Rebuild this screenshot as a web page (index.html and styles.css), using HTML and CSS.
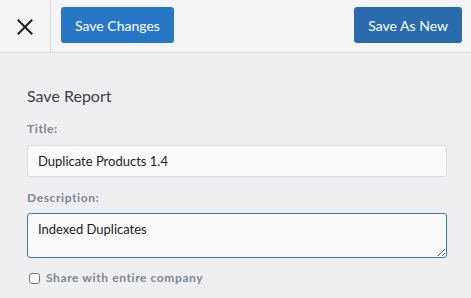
FILE: index.html
```html
<!DOCTYPE html>
<html lang="en">
<head>
    <meta charset="UTF-8">
    <meta name="viewport" content="width=device-width, initial-scale=1.0">
    <title>Save Report</title>
    <link rel="stylesheet" href="styles.css">
</head>
<body>
    <div class="toolbar">
        <button type="button" class="close-button" aria-label="Close">
            <svg xmlns="http://www.w3.org/2000/svg" width="16" height="16" viewBox="0 0 16 16" fill="none" stroke="currentColor" stroke-width="2" stroke-linecap="square">
                <line x1="1.5" y1="1.5" x2="14.5" y2="14.5"></line>
                <line x1="14.5" y1="1.5" x2="1.5" y2="14.5"></line>
            </svg>
        </button>
        <div class="toolbar-actions">
            <button type="button" class="primary-button">Save Changes</button>
            <button type="button" class="primary-button secondary">Save As New</button>
        </div>
    </div>

    <form class="report-form">
        <h2>Save Report</h2>

        <label class="field-label" for="title">Title:</label>
        <input type="text" id="title" class="text-input" value="Duplicate Products 1.4">

        <label class="field-label" for="description">Description:</label>
        <textarea id="description" class="text-input textarea">Indexed Duplicates</textarea>

        <label class="share-option">
            <input type="checkbox">
            <span>Share with entire company</span>
        </label>
    </form>
</body>
</html>
```

FILE: styles.css
```css
:root {
    --primary-color: #2877c6;
    --primary-dark: #2a6bae;
    --header-bg: #f4f4f6;
    --background: #efeff2;
    --label-color: #7a8599;
    --text-color: #3b3e45;
}

* {
    margin: 0;
    padding: 0;
    box-sizing: border-box;
    font-family: 'Lato', 'Open Sans', sans-serif;
}

body {
    background: var(--background);
    width: 471px;
    height: 298px;
    overflow: hidden;
}

.toolbar {
    display: flex;
    height: 53px;
    background: var(--header-bg);
    border-bottom: 1px solid #dcdce0;
}

.close-button {
    width: 51px;
    display: flex;
    align-items: center;
    justify-content: center;
    padding-top: 1px;
    background: none;
    border: none;
    border-right: 1px solid #d6d6da;
    color: #1f1f22;
}

.toolbar-actions {
    flex: 1;
    display: flex;
    justify-content: space-between;
    align-items: flex-start;
    padding: 7px 9px 0 10px;
}

.primary-button {
    height: 36px;
    padding: 0 14px;
    background: var(--primary-color);
    color: white;
    border: none;
    border-radius: 3px;
    font-size: 14px;
    cursor: pointer;
}

.primary-button.secondary {
    background: var(--primary-dark);
}

.report-form {
    display: flex;
    flex-direction: column;
    padding: 33px 24px 0 27px;
}

h2 {
    color: var(--text-color);
    font-size: 16px;
    font-weight: 400;
    line-height: 20px;
    margin-bottom: 15px;
}

.field-label {
    color: var(--label-color);
    font-size: 12px;
    font-weight: 700;
    letter-spacing: 0.6px;
    line-height: 16px;
    margin-bottom: 8px;
}

.text-input {
    width: 420px;
    height: 32px;
    padding: 0 10px;
    background: #fafafa;
    border: 1px solid #d5dce6;
    border-radius: 3px;
    color: #1c1c1e;
    font-size: 13px;
    margin-bottom: 13px;
}

.textarea {
    height: 45px;
    padding: 7px 10px;
    border-color: #2f7bcf;
    outline: none;
    line-height: 16px;
    resize: vertical;
    margin-top: -1px;
    margin-bottom: 12px;
}

.share-option {
    display: flex;
    align-items: center;
    gap: 6px;
    padding-left: 2px;
    color: var(--label-color);
    font-size: 12px;
    font-weight: 700;
    letter-spacing: 0.6px;
    line-height: 16px;
}

.share-option input {
    width: 11px;
    height: 11px;
    margin: 0;
}
```
